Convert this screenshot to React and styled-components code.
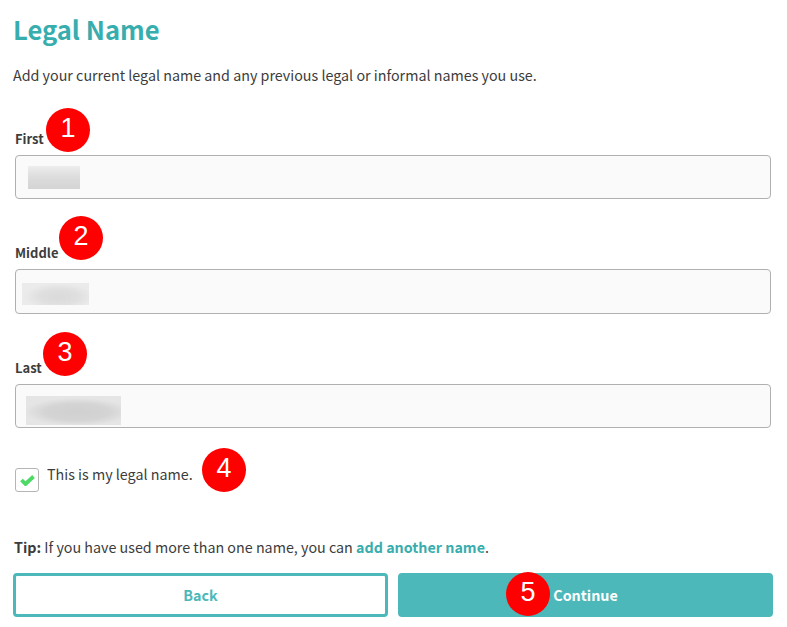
import React from "react";
import styled, { createGlobalStyle } from "styled-components";

const Global = createGlobalStyle`
  html, body { margin: 0; padding: 0; background: #fff; }
  body { font-family: "Noto Sans CJK SC", "Source Sans Pro", "Noto Sans", sans-serif; color: #3c3c3c; }
`;

const Page = styled.div`
  width: 787px;
  height: 627px;
  box-sizing: border-box;
  padding: 11px 14px 0 13px;
  position: relative;
  overflow: hidden;
`;
const Title = styled.h1`
  margin: 0;
  font-size: 25.6px;
  line-height: 35px;
  font-weight: 700;
  color: #38adae;
`;
const Intro = styled.p`
  margin: 11px 0 0 0;
  font-size: 14.3px;
  line-height: 36px;
  height: 36px;
  color: #3c3c3c;
`;
const Field = styled.div`
  margin: ${(p) => p.$top}px 0 0 2px;
  width: 756px;
  display: flex;
  flex-direction: column;
  position: relative;
`;
const Label = styled.label`
  font-size: 13px;
  line-height: 20px;
  font-weight: 700;
  color: #3c3c3c;
  margin-bottom: 6px;
`;
const Input = styled.div`
  height: ${(p) => p.$h}px;
  box-sizing: border-box;
  border: 1px solid #b0b0b0;
  border-radius: 4px;
  background: #fafafa;
  display: flex;
  align-items: center;
  padding-left: ${(p) => p.$pad}px;
`;
const Blur = styled.div`
  width: ${(p) => p.$w}px;
  height: ${(p) => p.$h}px;
  margin-top: ${(p) => p.$drop || 0}px;
  background: ${(p) => p.$fill};
`;
const Badge = styled.div`
  position: absolute;
  left: ${(p) => p.$x}px;
  top: ${(p) => p.$y}px;
  width: 44px;
  height: 44px;
  border-radius: 50%;
  background: #ff0000;
  color: #fff;
  font-family: "Liberation Sans", Arial, sans-serif;
  font-size: 27px;
  line-height: 40px;
  text-align: center;
`;
const CheckRow = styled.div`
  margin: 40px 0 0 2px;
  display: flex;
  align-items: flex-start;
  gap: 8px;
  height: 24px;
`;
const Box = styled.div`
  width: 24px;
  height: 24px;
  box-sizing: border-box;
  border: 1px solid #b5b5b5;
  border-radius: 3px;
  background: #fff;
  display: flex;
  align-items: center;
  justify-content: center;
`;
const CheckText = styled.span`
  font-size: 14.3px;
  line-height: 12px;
  color: #3c3c3c;
`;
const Tip = styled.p`
  margin: 43px 0 0 1px;
  font-size: 14.3px;
  line-height: 24px;
  height: 24px;
  color: #3c3c3c;
  b { font-weight: 700; }
  a { font-weight: 700; color: #38adae; text-decoration: none; }
`;
const Actions = styled.div`
  margin-top: 14px;
  display: grid;
  grid-template-columns: 375px 375px;
  column-gap: 10px;
`;
const Button = styled.button`
  height: 44px;
  box-sizing: border-box;
  border: 3px solid #4db8ba;
  border-radius: 4px;
  background: ${(p) => (p.$primary ? "#4db8ba" : "#fff")};
  color: ${(p) => (p.$primary ? "#fff" : "#4db8ba")};
  font-family: inherit;
  font-size: 14.3px;
  line-height: 18px;
  font-weight: 700;
  padding: 0;
`;

const firstFill = "linear-gradient(180deg, #ededed 0%, #dcdcdc 50%, #d4d4d4 100%)";
const middleFill = "radial-gradient(ellipse 52% 60% at 55% 62%, #dadada 0%, #dfdfdf 55%, #ebebeb 100%), #ebebeb";
const lastFill = "radial-gradient(ellipse 56% 48% at 54% 55%, #d0d0d0 0%, #d4d4d4 60%, #e5e5e5 100%), #e5e5e5";

export default function App() {
  return (
    <Page>
      <Global />
      <Title>Legal Name</Title>
      <Intro>Add your current legal name and any previous legal or informal names you use.</Intro>
      <Field $top={36}>
        <Label>First</Label>
        <Input $h={44} $pad={12}><Blur $w={52} $h={23} $fill={firstFill} /></Input>
      </Field>
      <Field $top={44}>
        <Label>Middle</Label>
        <Input $h={45} $pad={6}><Blur $w={67} $h={22} $drop={5} $fill={middleFill} /></Input>
      </Field>
      <Field $top={44}>
        <Label>Last</Label>
        <Input $h={44} $pad={10}><Blur $w={95} $h={29} $drop={8} $fill={lastFill} /></Input>
      </Field>
      <CheckRow>
        <Box>
          <svg width="15" height="12" viewBox="0 0 15 12">
            <path d="M1.5 6 L5.5 10 L13.5 2.5" fill="none" stroke="#4cd964" strokeWidth="3.8" />
          </svg>
        </Box>
        <CheckText>This is my legal name.</CheckText>
      </CheckRow>
      <Tip><b>Tip:</b> If you have used more than one name, you can <a href="#">add another name</a>.</Tip>
      <Actions>
        <Button>Back</Button>
        <Button $primary>Continue</Button>
      </Actions>
      <Badge $x={46} $y={108}>1</Badge>
      <Badge $x={59} $y={216}>2</Badge>
      <Badge $x={43} $y={332}>3</Badge>
      <Badge $x={202} $y={448}>4</Badge>
      <Badge $x={506} $y={572}>5</Badge>
    </Page>
  );
}
